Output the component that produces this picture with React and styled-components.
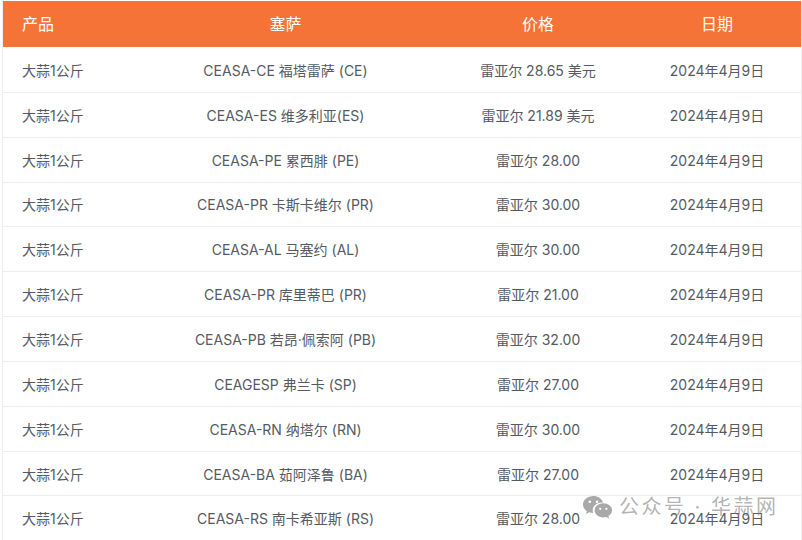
import React from "react";
import styled, { createGlobalStyle } from "styled-components";

const Global = createGlobalStyle`
  html, body { margin: 0; padding: 0; background: #fff; overflow: hidden; }
  body { width: 802px; height: 540px; font-family: Inter, "Noto Sans CJK SC", sans-serif; }
`;
const Page = styled.div`
  position: relative;
  width: 802px;
  height: 540px;
  overflow: hidden;
  padding: 1px 0 0 2px;
  box-sizing: border-box;
`;
const Table = styled.table`
  width: 800px;
  table-layout: fixed;
  border-collapse: separate;
  border-spacing: 0;
  border-left: 1px solid #eeeeee;
  border-right: 1px solid #eeeeee;
`;
const HeadCell = styled.th`
  background: #f57336;
  background-clip: padding-box;
  color: #fff;
  height: 47px;
  padding: 0 0 2px;
  box-sizing: border-box;
  border-bottom: 1px solid #fff;
  font-size: 16px;
  font-weight: 400;
  text-align: ${(p) => (p.$left ? "left" : "center")};
  padding-left: ${(p) => (p.$left ? "19px" : "0")};
`;
const Cell = styled.td`
  height: 44.85px;
  padding: 0;
  box-sizing: border-box;
  border-bottom: 1px solid #eeeeee;
  color: #555a63;
  font-size: 14px;
  white-space: nowrap;
  text-align: ${(p) => (p.$left ? "left" : "center")};
  padding-left: ${(p) => (p.$left ? "19px" : "0")};
`;
const Watermark = styled.div`
  position: absolute;
  left: 582px;
  top: 493px;
  display: flex;
  align-items: center;
  gap: 6px;
  color: rgba(130, 130, 130, 0.62);
  font-size: 20px;
  line-height: 28px;
  letter-spacing: 2.5px;
  white-space: nowrap;
`;

const rows = [
  ["CEASA-CE 福塔雷萨 (CE)", "雷亚尔 28.65 美元"],
  ["CEASA-ES 维多利亚(ES)", "雷亚尔 21.89 美元"],
  ["CEASA-PE 累西腓 (PE)", "雷亚尔 28.00"],
  ["CEASA-PR 卡斯卡维尔 (PR)", "雷亚尔 30.00"],
  ["CEASA-AL 马塞约 (AL)", "雷亚尔 30.00"],
  ["CEASA-PR 库里蒂巴 (PR)", "雷亚尔 21.00"],
  ["CEASA-PB 若昂·佩索阿 (PB)", "雷亚尔 32.00"],
  ["CEAGESP 弗兰卡 (SP)", "雷亚尔 27.00"],
  ["CEASA-RN 纳塔尔 (RN)", "雷亚尔 30.00"],
  ["CEASA-BA 茹阿泽鲁 (BA)", "雷亚尔 27.00"],
  ["CEASA-RS 南卡希亚斯 (RS)", "雷亚尔 28.00"],
];

const WeChat = () => (
  <svg width="31" height="24" viewBox="0 0 31 24" fill="#a9a9a9">
    <path d="M11.5 1C5.7 1 1 4.8 1 9.6c0 2.7 1.5 5 3.8 6.6L3.9 19l3.3-1.7c1.2.4 2.6.6 3.9.7-.3-.9-.4-1.7-.4-2.6 0-4.5 4.2-8 9.5-8h.9C19.600 3.700 15.900 1 11.500 1z" />
    <path d="M30 15.300c0-4-3.900-7.100-8.700-7.100s-8.700 3.100-8.700 7.100 3.900 7.100 8.700 7.100c1 0 2-.1 2.900-.4l2.900 1.500-.8-2.400c2.300-1.400 3.700-3.500 3.700-5.800z" />
    <circle cx="7.800" cy="6.700" r="1.300" fill="#fff" />
    <circle cx="15" cy="6.700" r="1.300" fill="#fff" />
    <circle cx="18.200" cy="13.800" r="1.100" fill="#fff" />
    <circle cx="24.400" cy="13.800" r="1.100" fill="#fff" />
  </svg>
);

export default function App() {
  return (
    <Page>
      <Global />
      <Table>
        <colgroup>
          <col style={{ width: 125 }} />
          <col style={{ width: 315 }} />
          <col style={{ width: 190 }} />
          <col style={{ width: 168 }} />
        </colgroup>
        <thead>
          <tr>
            <HeadCell $left>产品</HeadCell>
            <HeadCell>塞萨</HeadCell>
            <HeadCell>价格</HeadCell>
            <HeadCell>日期</HeadCell>
          </tr>
        </thead>
        <tbody>
          {rows.map(([market, price], i) => (
            <tr key={i}>
              <Cell $left>大蒜1公斤</Cell>
              <Cell>{market}</Cell>
              <Cell>{price}</Cell>
              <Cell>2024年4月9日</Cell>
            </tr>
          ))}
        </tbody>
      </Table>
      <Watermark>
        <WeChat />
        <span>公众号 · 华蒜网</span>
      </Watermark>
    </Page>
  );
}
